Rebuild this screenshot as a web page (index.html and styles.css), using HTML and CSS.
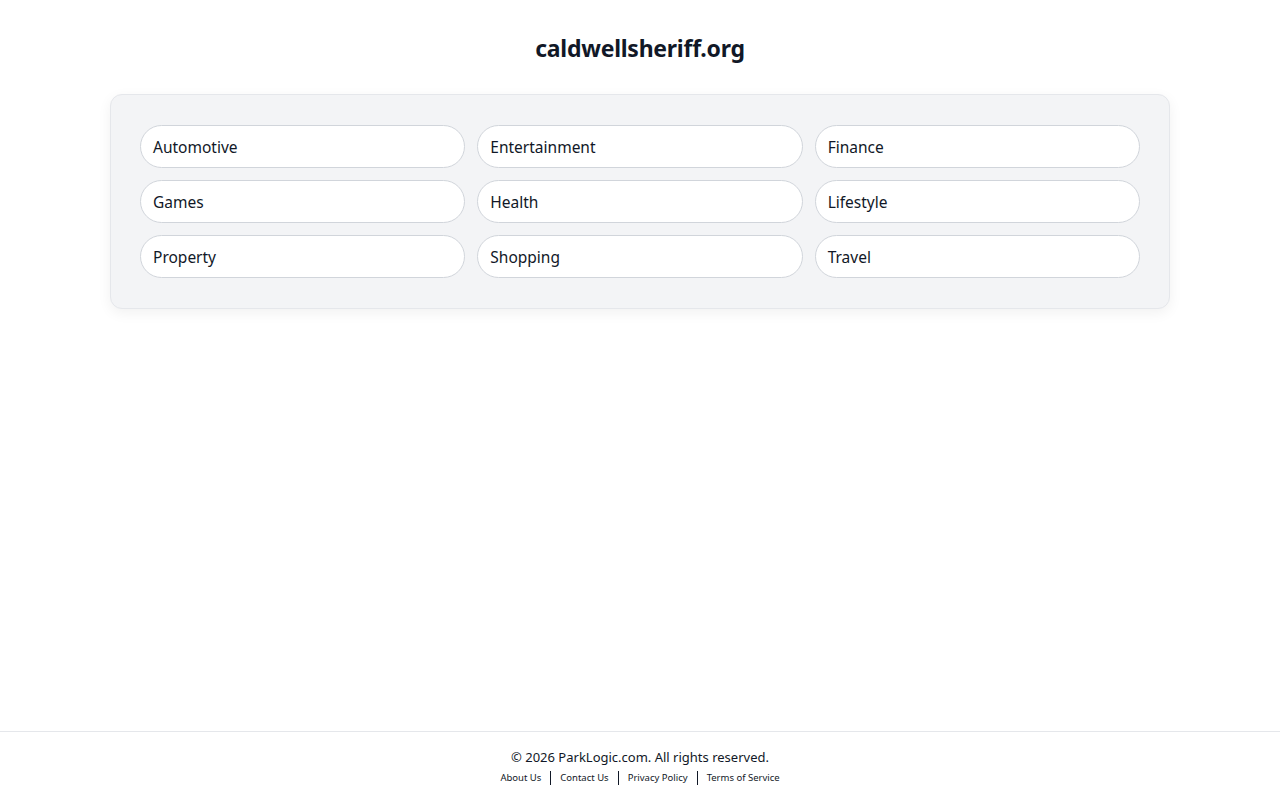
FILE: index.html
```html
<!DOCTYPE html>
<html lang="en">
<head>
<meta charset="utf-8">
<title>caldwellsheriff.org</title>
<link rel="stylesheet" href="styles.css">
</head>
<body>
<div class="page">
  <main class="main">
    <h1 class="title">caldwellsheriff.org</h1>
    <section class="card">
      <div class="grid">
        <a class="pill" href="#">Automotive</a>
        <a class="pill" href="#">Entertainment</a>
        <a class="pill" href="#">Finance</a>
        <a class="pill" href="#">Games</a>
        <a class="pill" href="#">Health</a>
        <a class="pill" href="#">Lifestyle</a>
        <a class="pill" href="#">Property</a>
        <a class="pill" href="#">Shopping</a>
        <a class="pill" href="#">Travel</a>
      </div>
    </section>
  </main>
  <footer class="footer">
    <p class="copy">© 2026 ParkLogic.com. All rights reserved.</p>
    <nav class="links">
      <a href="#">About Us</a>
      <span class="sep"></span>
      <a href="#">Contact Us</a>
      <span class="sep"></span>
      <a href="#">Privacy Policy</a>
      <span class="sep"></span>
      <a href="#">Terms of Service</a>
    </nav>
  </footer>
</div>
</body>
</html>
```

FILE: styles.css
```css
* { box-sizing: border-box; }
html, body { margin: 0; padding: 0; }
body {
  font-family: "Noto Sans", "Open Sans", "DejaVu Sans", sans-serif;
  color: #111827;
  background: #ffffff;
}
.page {
  min-height: 800px;
  display: flex;
  flex-direction: column;
}
.main {
  flex: 1;
  padding: 32px 110px 0;
}
.title {
  margin: 0;
  text-align: center;
  font-size: 23px;
  line-height: 32px;
  font-weight: 700;
  color: #111827;
  letter-spacing: -0.25px;
}
.card {
  margin-top: 30px;
  background: #f3f4f6;
  border: 1px solid #e5e7eb;
  border-radius: 12px;
  padding: 30px 29px;
  box-shadow: 0 4px 14px rgba(0, 0, 0, 0.06);
}
.grid {
  display: grid;
  grid-template-columns: repeat(3, 1fr);
  column-gap: 12px;
  row-gap: 12px;
}
.pill {
  display: flex;
  align-items: center;
  height: 43px;
  padding: 0 12px;
  background: #ffffff;
  border: 1px solid #d1d5db;
  border-radius: 22px;
  font-size: 15.5px;
  color: #111827;
  text-decoration: none;
}
.footer {
  border-top: 1px solid #e5e7eb;
  padding: 16px 0 14px;
  text-align: center;
}
.copy {
  margin: 0;
  font-size: 13px;
  line-height: 19px;
  color: #111827;
}
.links {
  margin-top: 3px;
  display: flex;
  justify-content: center;
  align-items: center;
  gap: 9px;
}
.links a {
  font-size: 9.5px;
  line-height: 16px;
  color: #111827;
  text-decoration: none;
}
.sep {
  width: 1px;
  height: 14px;
  background: #111827;
}
```
